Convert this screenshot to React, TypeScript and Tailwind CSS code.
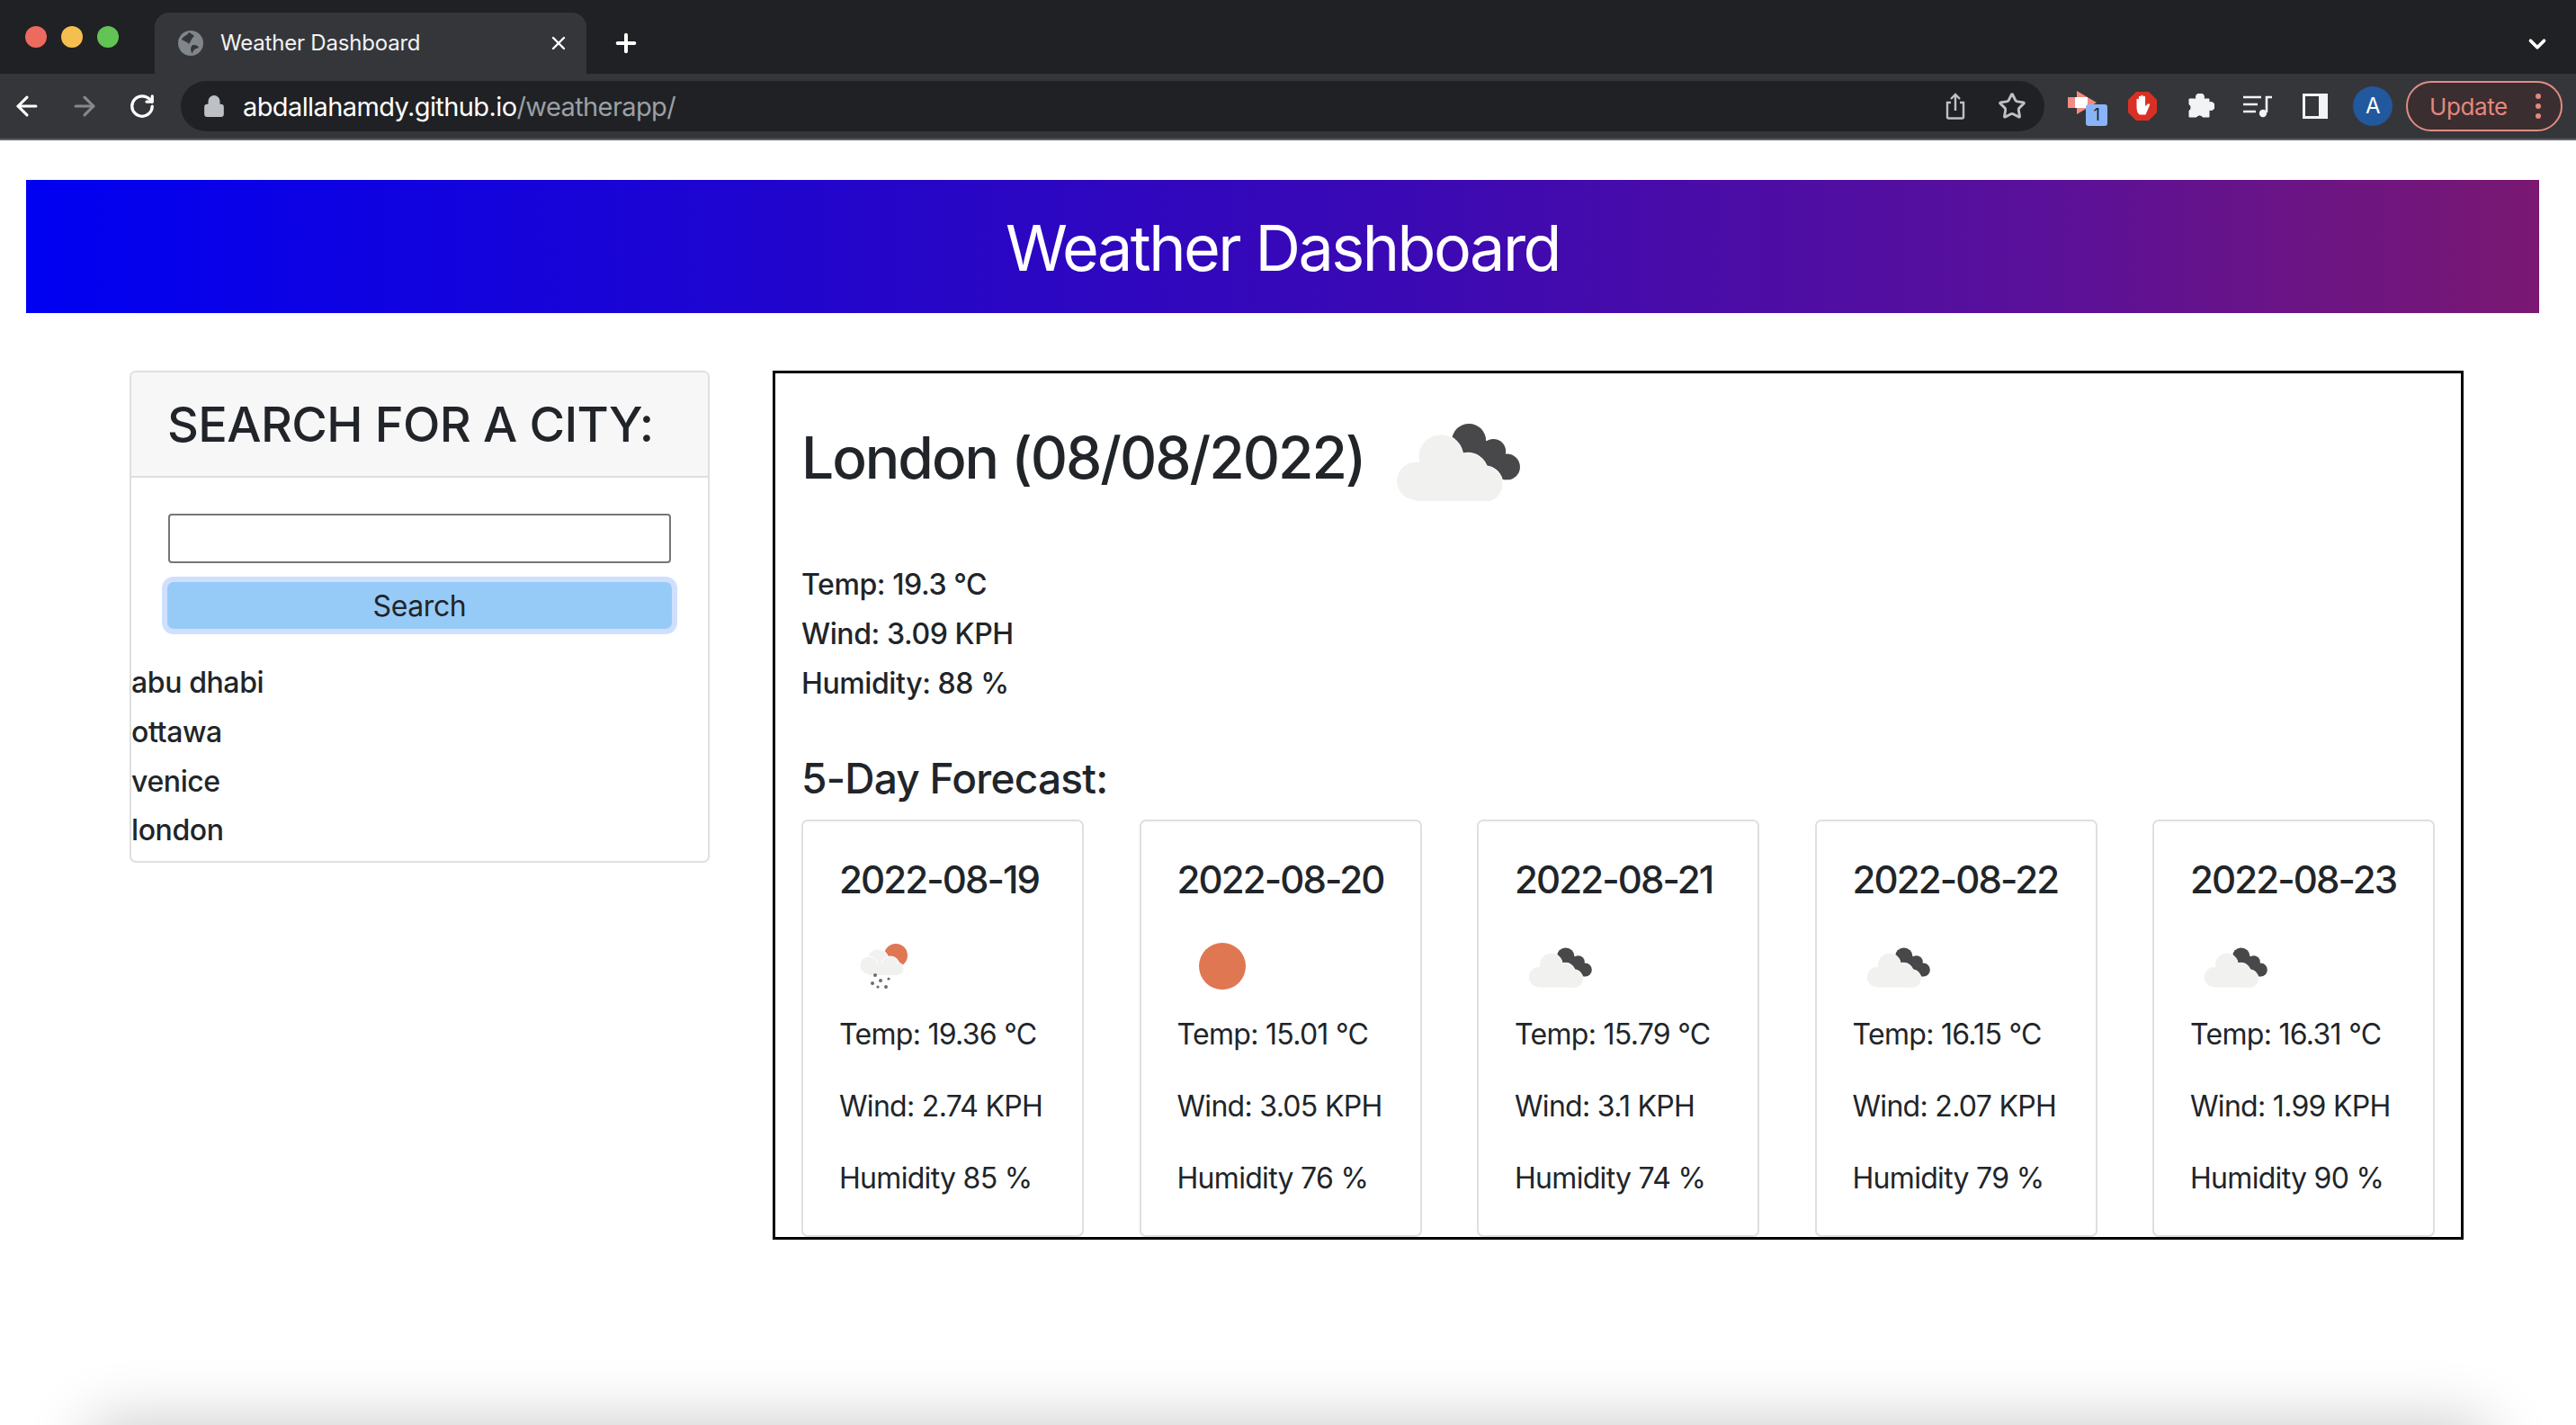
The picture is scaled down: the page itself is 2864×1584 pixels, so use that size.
import { ArrowLeft, ArrowRight, ChevronDown, Lock, Plus, RotateCw, Star, X } from 'lucide-react'

const days = [
  { date: '2022-08-19', temp: '19.36', wind: '2.74', humidity: '85', icon: 'rain' },
  { date: '2022-08-20', temp: '15.01', wind: '3.05', humidity: '76', icon: 'sun' },
  { date: '2022-08-21', temp: '15.79', wind: '3.1', humidity: '74', icon: 'cloud' },
  { date: '2022-08-22', temp: '16.15', wind: '2.07', humidity: '79', icon: 'cloud' },
  { date: '2022-08-23', temp: '16.31', wind: '1.99', humidity: '90', icon: 'cloud' },
]

const cities = ['abu dhabi', 'ottawa', 'venice', 'london']

function CloudIcon({ className }: { className: string }) {
  return (
    <svg viewBox="153 124 416 262" className={className}>
      <g fill="#48484a">
        <circle cx="395" cy="182" r="58" />
        <circle cx="478" cy="218" r="42" />
        <circle cx="524" cy="270" r="44" />
        <path d="M350 170 L420 160 L540 240 L520 314 L440 300 Z" />
      </g>
      <g fill="#f1f1f0" stroke="#ffffff" strokeWidth="6" paintOrder="stroke">
        <circle cx="300" cy="236" r="74" />
        <circle cx="392" cy="290" r="66" />
        <circle cx="448" cy="328" r="60" />
        <circle cx="216" cy="318" r="64" />
      </g>
      <g fill="#f1f1f0">
        <circle cx="300" cy="236" r="74" />
        <circle cx="392" cy="290" r="66" />
        <circle cx="448" cy="328" r="60" />
        <circle cx="216" cy="318" r="64" />
        <rect x="216" y="290" width="232" height="96" />
      </g>
    </svg>
  )
}

function RainIcon() {
  return (
    <svg viewBox="0 0 150 90" className="w-[150px] h-[90px]">
      <circle cx="66" cy="33" r="13" fill="#df7753" />
      <g fill="#f1f1f0" stroke="#ffffff" strokeWidth="1">
        <circle cx="46" cy="38" r="12" />
        <circle cx="60" cy="44" r="10" />
        <circle cx="36" cy="44" r="10" />
        <circle cx="68" cy="48" r="7" />
      </g>
      <rect x="36" y="42" width="32" height="13" fill="#f1f1f0" />
      <g fill="#6d6d6f">
        <circle cx="43" cy="55" r="2" />
        <circle cx="49" cy="61" r="2" />
        <circle cx="40" cy="64" r="2" />
        <circle cx="58" cy="59" r="1.6" />
        <circle cx="46" cy="68" r="1.6" />
        <circle cx="55" cy="68" r="2" />
      </g>
    </svg>
  )
}

function ForecastCard({ date, temp, wind, humidity, icon }: (typeof days)[number]) {
  return (
    <div className="w-[314px] h-[464px] shrink-0 rounded-[7px] border-2 border-[#dfdfdf] pl-[40px] pt-[40px] tracking-[-0.7px]">
      <h5 className="text-[42px] leading-[50px] font-medium tracking-[-1.9px]">{date}</h5>
      <div className="h-[114px] mt-[5px] flex items-start">
        {icon === 'rain' && <div className="-ml-[3px] mt-[21px]"><RainIcon /></div>}
        {icon === 'sun' && <div className="ml-[24px] mt-[40px] w-[52px] h-[52px] rounded-full bg-[#df7753]" />}
        {icon === 'cloud' && <CloudIcon className="ml-[16px] mt-[45px] w-[70px] h-[45px]" />}
      </div>
      <p className="h-[80px] leading-[55px]">Temp: {temp} °C</p>
      <p className="h-[80px] leading-[55px]">Wind: {wind} KPH</p>
      <p className="h-[80px] leading-[55px]">Humidity {humidity} %</p>
    </div>
  )
}

function BrowserChrome() {
  return (
    <div className="font-['Inter',sans-serif]">
      <div className="h-[82px] bg-[#202124] flex pl-[28px]">
        <div className="flex gap-[16px] pt-[29px]">
          <span className="w-[24px] h-[24px] rounded-full bg-[#ed6a5e]" />
          <span className="w-[24px] h-[24px] rounded-full bg-[#f5bf4f]" />
          <span className="w-[24px] h-[24px] rounded-full bg-[#61c454]" />
        </div>
        <div className="ml-[40px] mt-[14px] w-[480px] h-[68px] bg-[#35363a] rounded-t-[16px] flex items-center pl-[26px]">
          <svg viewBox="0 0 28 28" className="w-[28px] h-[28px]">
            <circle cx="14" cy="14" r="14" fill="#80868b" />
            <path d="M12 2 C10 6 5 6 4 10 C7 12 10 12 12 15 C14 13 15 8 18 6 C16 4 14 3 12 2 Z M16 26 C16 22 19 20 23 19 C22 16 19 16 16 16 C13 19 14 23 16 26 Z" fill="#35363a" />
          </svg>
          <span className="ml-[19px] text-[24px] leading-none text-[#f1f3f4] w-[366px] tracking-[-0.2px]">Weather Dashboard</span>
          <X size={24} strokeWidth={2.4} className="text-white -ml-[2px]" />
        </div>
        <Plus size={32} strokeWidth={3} className="ml-[28px] mt-[32px] text-white" />
        <div className="flex-1" />
        <ChevronDown size={30} strokeWidth={3} className="mr-[28px] mt-[34px] text-white" />
      </div>
      <div className="h-[74px] bg-[#35363a] border-b-2 border-[#5f6166] flex items-center">
        <ArrowLeft size={34} strokeWidth={2.2} className="ml-[13px] text-white" />
        <ArrowRight size={34} strokeWidth={2.2} className="ml-[30px] text-[#86888b]" />
        <RotateCw size={30} strokeWidth={2.6} className="ml-[32px] text-white" />
        <div className="ml-[28px] w-[2072px] h-[56px] rounded-full bg-[#202124] flex items-center pl-[24px] pr-[20px]">
          <Lock size={26} fill="#bdc1c6" className="text-[#bdc1c6]" />
          <span className="ml-[19px] text-[29px] leading-none text-white tracking-[-0.6px]">
            abdallahamdy.github.io<span className="text-[#9aa0a6]">/weatherapp/</span>
          </span>
          <div className="flex-1" />
          <svg viewBox="0 0 22 30" className="w-[22px] h-[30px]" fill="none" stroke="#bdc1c6" strokeWidth="2.4">
            <path d="M6 11 H2 V27 a1.5 1.5 0 0 0 1.5 1.5 H18.5 a1.5 1.5 0 0 0 1.5 -1.5 V11 H16 M11 20 V2 M6 7 L11 2 L16 7" />
          </svg>
          <Star size={32} strokeWidth={2.2} className="ml-[36px] text-[#bdc1c6]" />
        </div>
        <div className="relative ml-[26px] w-[34px] h-[34px]">
          <svg viewBox="0 0 32 26" className="w-[32px] h-[26px]">
            <path d="M0 7 H10 V0 L32 13 L10 26 V19 H0 Z" fill="#f28b82" />
            <rect x="8" y="7" width="14" height="12" fill="#ffffff" />
          </svg>
          <span className="absolute left-[20px] top-[15px] w-[24px] h-[24px] rounded-[3px] bg-[#8ab4f8] text-[18px] leading-[24px] text-center text-[#202124]">1</span>
        </div>
        <svg viewBox="0 0 32 32" className="ml-[33px] w-[32px] h-[32px]">
          <path d="M9 0 H23 L32 9 V23 L23 32 H9 L0 23 V9 Z" fill="#d93025" />
          <path d="M9.5 15 V9 a1.2 1.2 0 0 1 2.4 0 V6 a1.2 1.2 0 0 1 2.4 0 V5 a1.2 1.2 0 0 1 2.4 0 V6 a1.2 1.2 0 0 1 2.4 0 V16 L22 13.5 a1.3 1.3 0 0 1 2 1.6 L19.5 25.5 H13 C10 24 9.5 20 9.5 15 Z" fill="#ffffff" />
        </svg>
        <svg viewBox="0 0 30 28" className="ml-[34px] w-[30px] h-[28px]">
          <path d="M10 6 a4.5 4.5 0 1 1 8 0 H24 V10 a4.5 4.5 0 1 1 0 8 V26 H17 a4 4 0 0 0 -7 0 H2 V19 a4 4 0 0 0 0 -7 V6 Z" fill="#f1f3f4" stroke="#f1f3f4" strokeWidth="1" strokeLinejoin="round" />
        </svg>
        <svg viewBox="0 0 32 26" className="ml-[32px] w-[32px] h-[26px]" fill="none" stroke="#f1f3f4" strokeWidth="2.6">
          <path d="M0 3 H20 M0 11 H16 M0 19 H14 M26 20 V3 H32" />
          <circle cx="22" cy="21" r="4.2" fill="#f1f3f4" stroke="none" />
        </svg>
        <div className="ml-[34px] w-[28px] h-[28px] bg-[#f1f3f4] pl-[3px] py-[3px] pr-[10px]">
          <div className="w-full h-full bg-[#35363a]" />
        </div>
        <div className="ml-[28px] w-[44px] h-[44px] rounded-full bg-[#22589e] text-white text-[24px] flex items-center justify-center">A</div>
        <div className="ml-[15px] w-[174px] h-[56px] rounded-full border-2 border-[#e08d85] bg-[#3a2e30] flex items-center pl-[24px] text-[#e6877d] text-[26px]">
          Update
          <div className="ml-[31px] flex flex-col gap-[5px]">
            <span className="w-[6px] h-[6px] rounded-full bg-[#e6877d]" />
            <span className="w-[6px] h-[6px] rounded-full bg-[#e6877d]" />
            <span className="w-[6px] h-[6px] rounded-full bg-[#e6877d]" />
          </div>
        </div>
      </div>
    </div>
  )
}

export default function App() {
  return (
    <div className="relative h-[1584px] overflow-hidden bg-white text-[#212529] font-['Inter',sans-serif] text-[32px] tracking-[-0.4px]">
      <BrowserChrome />
      <header className="mt-[44px] ml-[29px] w-[2794px] h-[148px] pt-[2px] bg-[linear-gradient(90deg,#0000f2_0%,#2606c8_35%,#3b09b4_55%,#5a109a_80%,#7a1872_100%)] flex items-center justify-center text-white text-[70px] tracking-[-2.5px]">
        Weather Dashboard
      </header>
      <main className="mt-[64px] pl-[144px] flex gap-[70px] items-start">
        <aside className="w-[645px] h-[547px] rounded-[7px] border-2 border-[#dfdfdf] overflow-hidden">
          <h2 className="h-[117px] pl-[40px] bg-[#f7f7f7] border-b-2 border-[#dfdfdf] flex items-center text-[54px] font-medium tracking-[-0.6px]">
            SEARCH FOR A CITY:
          </h2>
          <div className="pt-[40px]">
            <input className="block ml-[41px] w-[559px] h-[55px] rounded-[4px] border-2 border-[#767676] bg-white" />
            <button className="block ml-[40px] mt-[21px] pt-[2px] w-[561px] h-[52px] rounded-[7px] bg-[#97cbf7] ring-[6px] ring-[#cfe0ff] text-[32px] text-[#212529]">
              Search
            </button>
            <ul className="mt-[33px]">
              {cities.map((city) => (
                <li key={city} className="leading-[54.8px] font-medium">{city}</li>
              ))}
            </ul>
          </div>
        </aside>
        <section className="w-[1880px] h-[966px] border-[3px] border-black overflow-hidden pl-[29px]">
          <div className="flex items-center h-[130px] mt-[29px]">
            <h2 className="text-[64px] font-medium tracking-[-2px]">London (08/08/2022)</h2>
            <CloudIcon className="ml-[36px] mt-[10px] w-[138px] h-[86px]" />
          </div>
          <div className="mt-[49px] font-medium">
            <p className="leading-[54.8px]">Temp: 19.3 °C</p>
            <p className="leading-[54.8px]">Wind: 3.09 KPH</p>
            <p className="leading-[54.8px]">Humidity: 88 %</p>
          </div>
          <h3 className="mt-[50px] text-[46px] leading-[56px] font-medium tracking-[-0.75px]">5-Day Forecast:</h3>
          <div className="mt-[18px] w-[1816px] flex justify-between">
            {days.map((day) => (
              <ForecastCard key={day.date} {...day} />
            ))}
          </div>
        </section>
      </main>
      <div className="absolute left-[100px] right-[100px] top-[1584px] h-[60px] shadow-[0_0_70px_rgba(0,0,0,0.24)]" />
    </div>
  )
}
